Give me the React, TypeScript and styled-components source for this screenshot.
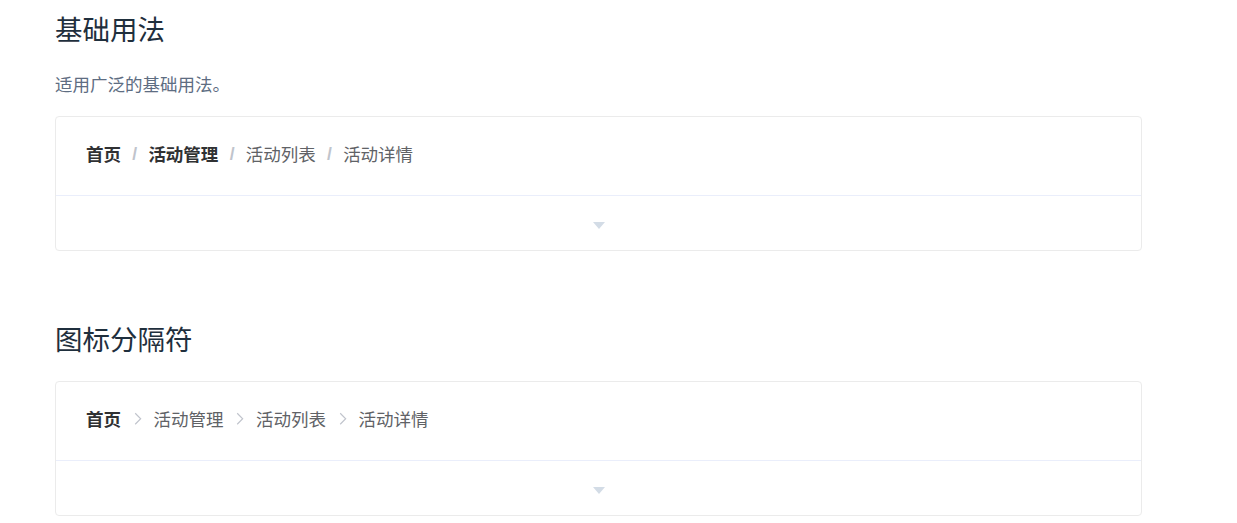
import styled, { createGlobalStyle } from "styled-components";

const GlobalStyle = createGlobalStyle`
    body {
        margin: 0;
        background: #fff;
        font-family: "Noto Sans CJK SC", "Noto Sans", sans-serif;
    }
`;

const Page = styled.div`
    width: 1087px;
    padding: 8px 0 0 55px;
`;
const Title = styled.h3<{ $top?: number }>`
    margin: ${(p) => p.$top ?? 0}px 0 0;
    font-size: 27.5px;
    line-height: 41px;
    font-weight: 400;
    color: #1f2f3d;
`;
const Desc = styled.p`
    margin: 22px 0 0;
    font-size: 17.5px;
    line-height: 26px;
    color: #5e6d82;
`;
const DemoBlock = styled.div<{ $top: number }>`
    margin-top: ${(p) => p.$top}px;
    border: 1px solid #ebebeb;
    border-radius: 4px;
`;
const Source = styled.div`
    padding: 28px 30px 32px;
`;
const Crumbs = styled.div`
    display: flex;
    align-items: center;
    height: 18px;
    font-size: 17.5px;
    line-height: 18px;
`;
const Item = styled.span<{ $link?: boolean }>`
    color: ${(p) => (p.$link ? "#303133" : "#606266")};
    font-weight: ${(p) => (p.$link ? 700 : 400)};
`;
const Slash = styled.span`
    margin: 0 11.25px;
    font-family: "Liberation Sans", sans-serif;
    font-weight: 700;
    color: #c0c4cc;
`;
const Arrow = styled.span`
    display: flex;
    align-items: center;
    justify-content: center;
    width: 17.5px;
    height: 18px;
    margin: 0 7.5px;
    color: #c0c4cc;
    svg {
        width: 17.5px;
        height: 17.5px;
    }
`;
const Meta = styled.div`
    height: 54px;
    border-top: 1px solid #eaeefb;
    display: flex;
    align-items: center;
    justify-content: center;
`;
const Caret = styled.span`
    width: 0;
    height: 0;
    margin-top: 4px;
    border-left: 6px solid transparent;
    border-right: 6px solid transparent;
    border-top: 7px solid #d3dce6;
`;

type Crumb = { label: string; link?: boolean };

const basic: Crumb[] = [
    { label: "首页", link: true },
    { label: "活动管理", link: true },
    { label: "活动列表" },
    { label: "活动详情" },
];
const withIcon: Crumb[] = [
    { label: "首页", link: true },
    { label: "活动管理" },
    { label: "活动列表" },
    { label: "活动详情" },
];

function ArrowRight() {
    return (
        <svg viewBox="0 0 24 24" fill="none" stroke="currentColor" strokeWidth="1.6">
            <path d="M8.5 4.5l7.5 7.5-7.5 7.5" />
        </svg>
    );
}

function Breadcrumb({ items, icon }: { items: Crumb[]; icon?: boolean }) {
    return (
        <Crumbs>
            {items.map((c, i) => (
                <span key={c.label} style={{ display: "contents" }}>
                    <Item $link={c.link}>{c.label}</Item>
                    {i < items.length - 1 &&
                        (icon ? (
                            <Arrow>
                                <ArrowRight />
                            </Arrow>
                        ) : (
                            <Slash>/</Slash>
                        ))}
                </span>
            ))}
        </Crumbs>
    );
}

export default function App() {
    return (
        <Page>
            <GlobalStyle />
            <Title>基础用法</Title>
            <Desc>适用广泛的基础用法。</Desc>
            <DemoBlock $top={19}>
                <Source>
                    <Breadcrumb items={basic} />
                </Source>
                <Meta>
                    <Caret />
                </Meta>
            </DemoBlock>
            <Title $top={67}>图标分隔符</Title>
            <DemoBlock $top={22}>
                <Source>
                    <Breadcrumb items={withIcon} icon />
                </Source>
                <Meta>
                    <Caret />
                </Meta>
            </DemoBlock>
        </Page>
    );
}
